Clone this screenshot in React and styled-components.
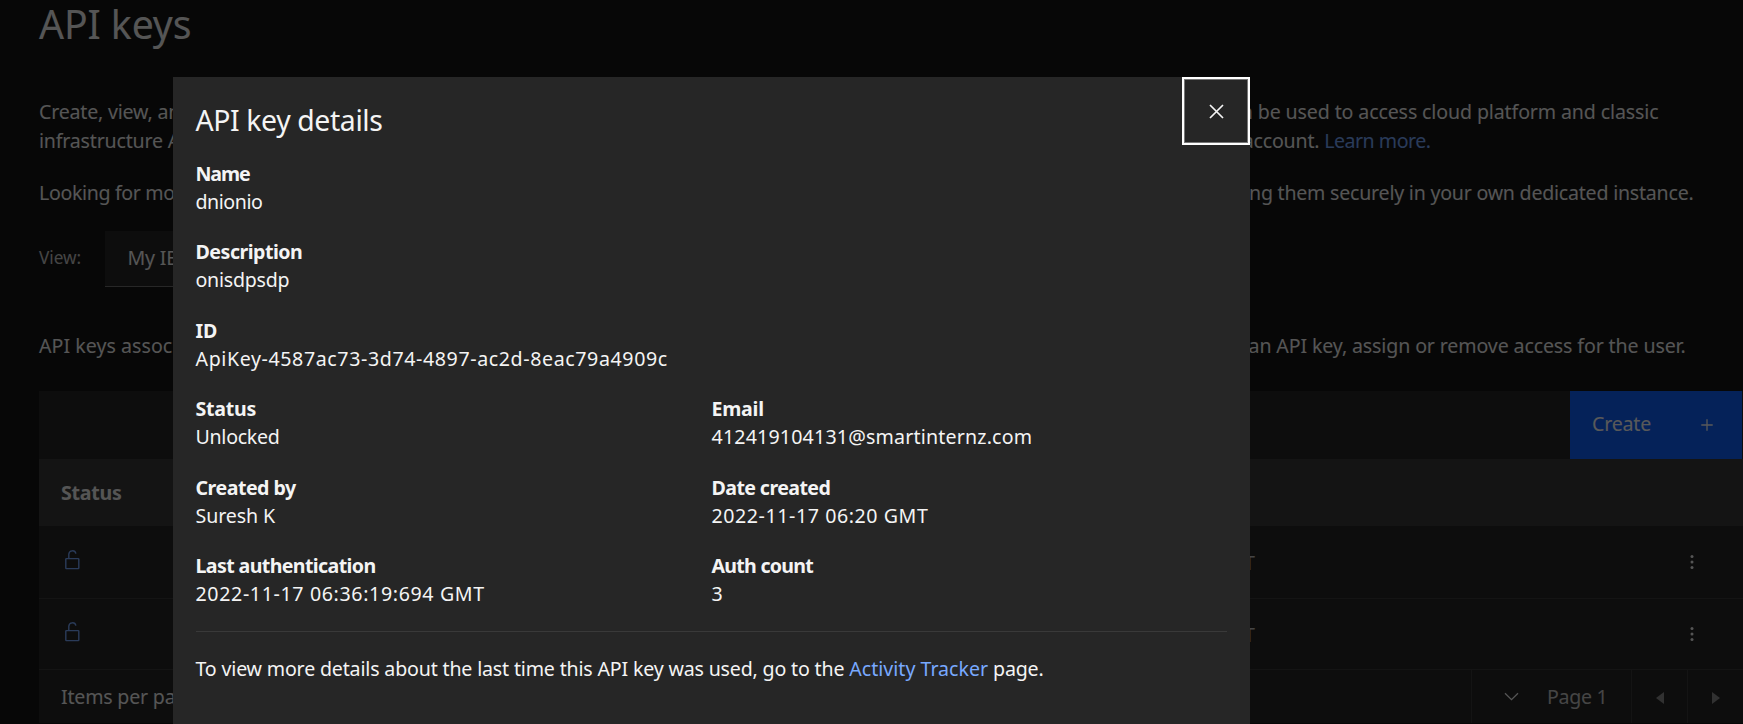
import React from 'react';
import styled, { createGlobalStyle } from 'styled-components';

const GlobalStyle = createGlobalStyle`
  * { box-sizing: border-box; }
  body {
    margin: 0;
    background: #161616;
    color: #f4f4f4;
    font-family: "Noto Sans", "Open Sans", sans-serif;
    font-size: 19.6px;
    overflow: hidden;
  }
`;

const Screen = styled.div`
  position: relative;
  width: 1743px;
  height: 724px;
  overflow: hidden;
  background: #161616;
`;

const Tracked = styled.span`
  letter-spacing: ${(p) => p.$track ?? -0.2}px;
  white-space: nowrap;
`;

/* ---- page behind the dialog ---- */

const Page = styled.main`
  padding: 1px 0 0 39px;
`;

const PageTitle = styled.h1`
  margin: 0 0 42px;
  font-size: 39.2px;
  font-weight: 400;
  line-height: 46px;
  padding-bottom: 8px;
  letter-spacing: -0.1px;
`;

const Paragraph = styled.div`
  margin-bottom: ${(p) => p.$after}px;
`;

const Line = styled.div`
  display: flex;
  justify-content: space-between;
  width: ${(p) => p.$width}px;
  height: 29px;
  line-height: 29px;
`;

const Link = styled.a`
  color: #78a9ff;
  letter-spacing: ${(p) => p.$track}px;
`;

const ViewBar = styled.div`
  display: flex;
  align-items: center;
  gap: 24px;
  margin-bottom: 44px;
`;

const ViewLabel = styled.span`
  width: 42px;
  padding-bottom: 3px;
  font-size: 17.2px;
  color: #c6c6c6;
  white-space: nowrap;
`;

const Select = styled.div`
  width: 360px;
  height: 56px;
  padding-left: 22.5px;
  line-height: 54px;
  background: #262626;
  border-bottom: 1px solid #6f6f6f;
  letter-spacing: -0.2px;
`;

const Table = styled.section`
  margin-top: 31px;
  background: #262626;
`;

const Toolbar = styled.div`
  display: flex;
  justify-content: flex-end;
  height: 68px;
  padding-right: 1px;
`;

const CreateButton = styled.button`
  display: flex;
  justify-content: space-between;
  width: 172px;
  height: 68px;
  padding: 18px 29px 0 22px;
  border: 0;
  background: #0f62fe;
  color: #fff;
  font: inherit;
  line-height: 29px;
  letter-spacing: -0.2px;

  svg { margin-top: 10px; }
`;

const HeaderRow = styled.div`
  display: flex;
  align-items: center;
  height: 67px;
  padding-left: 22px;
  background: #393939;
  font-weight: 700;
`;

const Row = styled.div`
  display: grid;
  grid-template-columns: 1091px 1fr 53px;
  align-items: center;
  height: ${(p) => p.$height}px;
  padding-left: 22px;
  border-bottom: 1px solid #393939;
`;

const DateCell = styled.span`
  justify-self: start;
  width: 103px;
  text-align: right;
  white-space: nowrap;
  color: #c6c6c6;
`;

const StatusCell = styled.span`
  display: flex;
  padding-bottom: 4px;
`;

const Footer = styled.div`
  display: flex;
  height: 53px;
  line-height: 53px;
  padding-left: 22px;
  color: #c6c6c6;
`;

const ItemsLabel = styled.span`
  flex: 1;
  letter-spacing: -0.2px;
  color: #f4f4f4;
`;

const PageSelect = styled.div`
  display: flex;
  align-items: center;
  gap: 28px;
  width: 160px;
  padding-left: 32px;
  border-left: 1px solid #393939;
`;

const PagerButton = styled.div`
  display: flex;
  align-items: center;
  justify-content: center;
  width: 56px;
  border-left: 1px solid #393939;
  padding-top: 3px;
`;

/* ---- dialog ---- */

const Overlay = styled.div`
  position: absolute;
  inset: 0;
  padding: 77px 0 0 173px;
  background: rgba(0, 0, 0, 0.65);
`;

const Dialog = styled.div`
  display: flex;
  justify-content: space-between;
  align-items: flex-start;
  width: 1077px;
  height: 660px;
  padding-left: 22.5px;
  background: #262626;
`;

const DialogBody = styled.div`
  flex: none;
  width: 1031px;
  padding-top: 25px;
`;

const DialogTitle = styled.h2`
  margin: 0 0 22px;
  font-size: 28.4px;
  font-weight: 400;
  line-height: 36px;
  letter-spacing: -0.38px;
`;

const Details = styled.dl`
  display: grid;
  grid-template-columns: 516px 1fr;
  row-gap: 22.4px;
  margin: 0;
  padding-bottom: 23.5px;
  border-bottom: 1px solid #393939;
`;

const Detail = styled.div`
  grid-column: ${(p) => (p.$wide ? '1 / -1' : 'auto')};
  line-height: 28px;
`;

const Term = styled.dt`
  font-weight: 700;
  letter-spacing: ${(p) => p.$track}px;
`;

const Value = styled.dd`
  margin: 0;
  letter-spacing: ${(p) => p.$track}px;
`;

const Note = styled.p`
  margin: 23px 0 0;
  line-height: 28px;
  letter-spacing: -0.17px;
`;

const CloseButton = styled.button`
  position: absolute;
  top: 77px;
  left: 1182px;
  display: flex;
  align-items: center;
  justify-content: center;
  width: 68px;
  height: 67.5px;
  padding: 1px 0 0;
  border: 2px solid #fff;
  box-shadow: inset 0 0 0 1px #777;
  background: #262626;
`;

const UnlockedIcon = () => (
  <svg width="20" height="22" viewBox="0 0 20 22" fill="none" stroke="#78a9ff" strokeWidth="1.4">
    <rect x="4.8" y="9.6" width="13" height="10" rx="0.6" />
    <path d="M7.8 9.6V5.2a3.6 3.6 0 0 1 7.1-.6" />
  </svg>
);

const KebabIcon = () => (
  <svg width="4" height="16" viewBox="0 0 4 16" fill="#f4f4f4">
    <circle cx="2" cy="2.4" r="1.5" />
    <circle cx="2" cy="8" r="1.5" />
    <circle cx="2" cy="13.6" r="1.5" />
  </svg>
);

const rows = [
  { id: 'first', height: 73 },
  { id: 'second', height: 71 },
];

const details = [
  { term: 'Name', tt: -1.1, value: 'dnionio', vt: -0.46, wide: true },
  { term: 'Description', tt: -0.5, value: 'onisdpsdp', vt: -0.25, wide: true },
  { term: 'ID', tt: -0.2, value: 'ApiKey-4587ac73-3d74-4897-ac2d-8eac79a4909c', vt: 0.61, wide: true },
  { term: 'Status', tt: -0.25, value: 'Unlocked', vt: -0.28 },
  { term: 'Email', tt: -0.25, value: '412419104131@smartinternz.com', vt: 0.18 },
  { term: 'Created by', tt: -0.5, value: 'Suresh K', vt: -0.1 },
  { term: 'Date created', tt: -0.6, value: '2022-11-17 06:20 GMT', vt: 0.57 },
  { term: 'Last authentication', tt: -0.62, value: '2022-11-17 06:36:19:694 GMT', vt: 0.64 },
  { term: 'Auth count', tt: -0.75, value: '3', vt: 0 },
];

export default function App() {
  return (
    <Screen>
      <GlobalStyle />
      <Page>
        <PageTitle>API keys</PageTitle>
        <Paragraph $after={23}>
          <Line $width={1619.5}>
            <Tracked>Create, view, and</Tracked>
            <Tracked $track={-0.13}>can be used to access cloud platform and classic</Tracked>
          </Line>
          <Line $width={1391.5}>
            <Tracked>infrastructure APIs</Tracked>
            <Tracked>
              account. <Link $track={-0.5}>Learn more.</Link>
            </Tracked>
          </Line>
        </Paragraph>
        <Paragraph $after={24}>
          <Line $width={1654.5}>
            <Tracked $track={-0.35}>Looking for more</Tracked>
            <Tracked $track={-0.23}>managing them securely in your own dedicated instance.</Tracked>
          </Line>
        </Paragraph>
        <ViewBar>
          <ViewLabel>View:</ViewLabel>
          <Select>My IBM</Select>
        </ViewBar>
        <Line $width={1646.5}>
          <Tracked $track={0.04}>API keys assoc</Tracked>
          <Tracked $track={-0.13}>an API key, assign or remove access for the user.</Tracked>
        </Line>
        <Table>
          <Toolbar>
            <CreateButton>
              Create
              <svg width="12" height="12" viewBox="0 0 12 12" stroke="#fff" strokeWidth="1.3">
                <path d="M6 .3v11.4M.3 6h11.4" />
              </svg>
            </CreateButton>
          </Toolbar>
          <HeaderRow>
            <Tracked $track={-0.25}>Status</Tracked>
          </HeaderRow>
          {rows.map((row) => (
            <Row key={row.id} $height={row.height}>
              <StatusCell>
                <UnlockedIcon />
              </StatusCell>
              <DateCell>06:20 GMT</DateCell>
              <KebabIcon />
            </Row>
          ))}
          <Footer>
            <ItemsLabel>Items per page:</ItemsLabel>
            <PageSelect>
              <svg width="15" height="9" viewBox="0 0 15 9" fill="none" stroke="#f4f4f4" strokeWidth="1.3">
                <path d="M1 1.2l6.5 6.4L14 1.2" />
              </svg>
              <Tracked $track={-0.3}>Page 1</Tracked>
            </PageSelect>
            <PagerButton>
              <svg width="8" height="12" viewBox="0 0 8 12" fill="#8d8d8d">
                <path d="M8 0v12L0 6z" />
              </svg>
            </PagerButton>
            <PagerButton>
              <svg width="8" height="12" viewBox="0 0 8 12" fill="#8d8d8d">
                <path d="M0 0v12l8-6z" />
              </svg>
            </PagerButton>
          </Footer>
        </Table>
      </Page>
      <Overlay>
        <Dialog>
          <DialogBody>
            <DialogTitle>API key details</DialogTitle>
            <Details>
              {details.map((d) => (
                <Detail key={d.term} $wide={d.wide}>
                  <Term $track={d.tt}>{d.term}</Term>
                  <Value $track={d.vt}>{d.value}</Value>
                </Detail>
              ))}
            </Details>
            <Note>
              To view more details about the last time this API key was used, go to the{' '}
              <Link $track={0}>Activity Tracker</Link> page.
            </Note>
          </DialogBody>
        </Dialog>
        <CloseButton aria-label="Close">
          <svg width="15" height="15" viewBox="0 0 15 15" stroke="#f4f4f4" strokeWidth="1.7">
            <path d="M1 1l13 13M14 1L1 14" />
          </svg>
        </CloseButton>
      </Overlay>
    </Screen>
  );
}
